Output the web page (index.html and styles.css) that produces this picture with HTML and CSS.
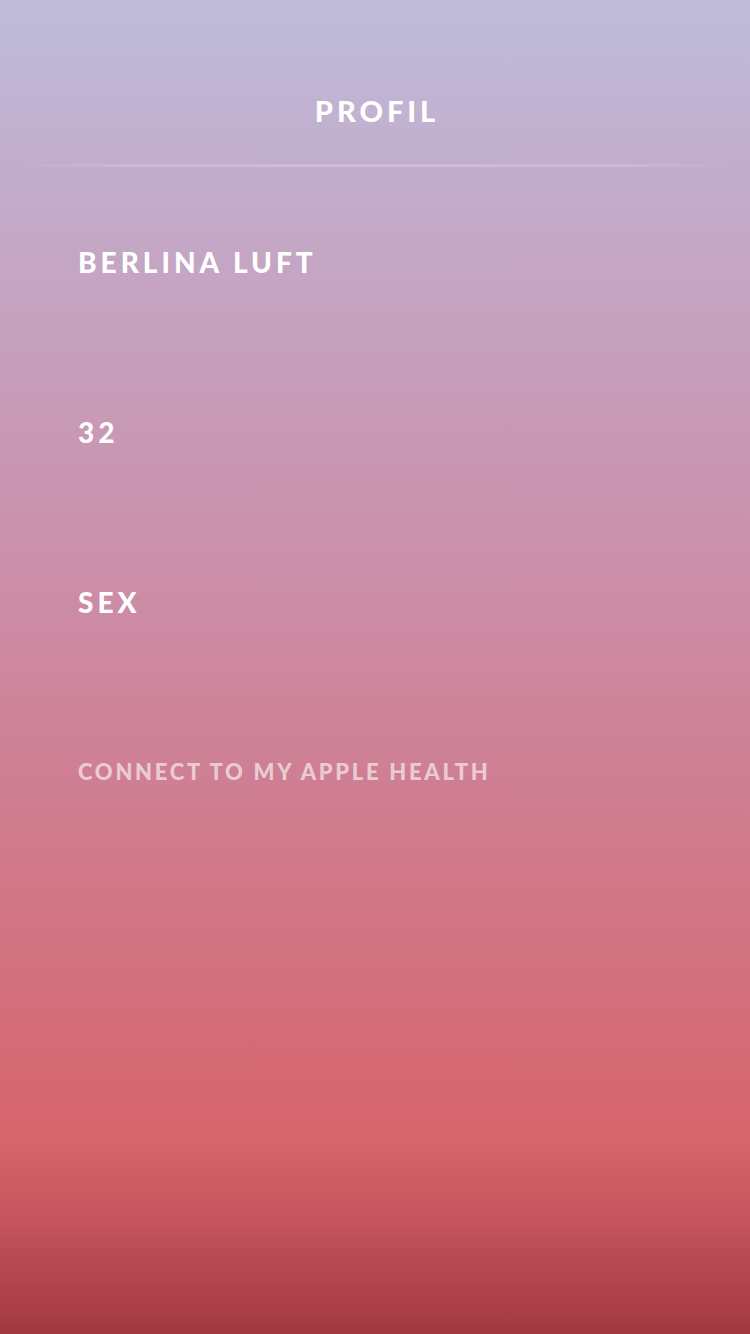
FILE: index.html
```html
<!DOCTYPE html>
<html>
<head>
<meta charset="utf-8">
<link rel="stylesheet" href="styles.css">
</head>
<body>
<div class="screen">
  <header class="header">
    <h1 class="title">PROFIL</h1>
  </header>
  <div class="divider"></div>
  <main class="fields">
    <div class="field">BERLINA LUFT</div>
    <div class="field">32</div>
    <div class="field">SEX</div>
    <div class="field link">CONNECT TO MY APPLE HEALTH</div>
  </main>
</div>
</body>
</html>
```
FILE: styles.css
```css
html, body {
  margin: 0;
  padding: 0;
}
body {
  width: 750px;
  height: 1334px;
  overflow: hidden;
  font-family: "Lato", "Open Sans", sans-serif;
}
.screen {
  width: 750px;
  height: 1334px;
  display: flex;
  flex-direction: column;
  background: linear-gradient(180deg,
    #bebcda 0px,
    #c4a6c4 260px,
    #cc8ca6 600px,
    #d17686 900px,
    #d7646c 1140px,
    #c4545d 1220px,
    #a2383f 1334px);
}
.header {
  height: 164px;
  display: flex;
  justify-content: center;
}
.title {
  margin: 0 0 0 4px;
  padding-top: 92px;
  font-size: 29px;
  line-height: 38px;
  font-weight: 900;
  letter-spacing: 4px;
  color: #ffffff;
}
.divider {
  height: 3px;
  margin: 0 20px;
  background: linear-gradient(90deg,
    rgba(255,255,255,0) 0%,
    rgba(255,255,255,0.15) 15%,
    rgba(255,255,255,0.2) 50%,
    rgba(255,255,255,0.15) 85%,
    rgba(255,255,255,0) 100%);
}
.fields {
  display: flex;
  flex-direction: column;
  padding: 76px 78px 0;
  gap: 132px;
}
.field {
  font-size: 28px;
  line-height: 38px;
  font-weight: 900;
  letter-spacing: 4px;
  color: #ffffff;
}
.link {
  font-size: 22px;
  letter-spacing: 2.7px;
  color: rgba(255,255,255,0.62);
}
```
